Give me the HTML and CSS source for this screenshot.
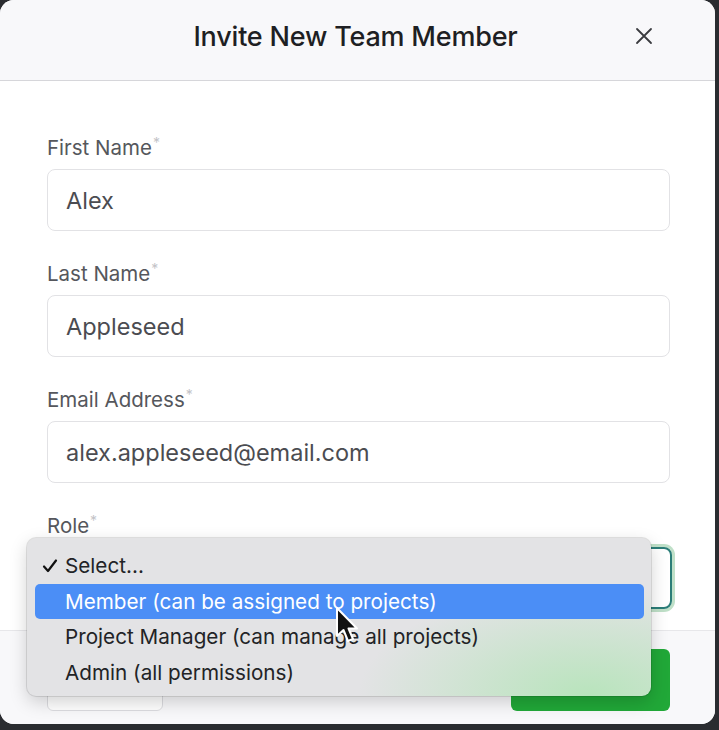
FILE: index.html
```html
<!DOCTYPE html>
<html lang="en">
<head>
<meta charset="utf-8">
<title>Invite New Team Member</title>
<link rel="stylesheet" href="styles.css">
</head>
<body>
<div class="modal">
  <header class="header">
    <span></span>
    <h1 class="title">Invite New Team Member</h1>
    <button class="close" aria-label="Close">
      <svg width="18" height="18" viewBox="0 0 18 18"><path d="M2 2L16 16M16 2L2 16" stroke="#3a3b3f" stroke-width="1.8" stroke-linecap="round"/></svg>
    </button>
  </header>
  <main class="body">
    <div class="field">
      <label class="label">First Name<sup class="req">*</sup></label>
      <div class="input">Alex</div>
    </div>
    <div class="field">
      <label class="label">Last Name<sup class="req">*</sup></label>
      <div class="input">Appleseed</div>
    </div>
    <div class="field">
      <label class="label">Email Address<sup class="req">*</sup></label>
      <div class="input">alex.appleseed@email.com</div>
    </div>
    <div class="field">
      <label class="label">Role<sup class="req">*</sup></label>
      <div class="input select" aria-label="Role">
        <svg class="chev" width="14" height="10" viewBox="0 0 14 10"><path d="M2 2L7 7L12 2" fill="none" stroke="#8a8b90" stroke-width="1.6" stroke-linecap="round"/></svg>
      </div>
    </div>
  </main>
  <footer class="footer">
    <button class="btn btn-cancel" aria-label="Cancel"></button>
    <button class="btn btn-primary" aria-label="Send Invite"></button>
  </footer>

  <div class="menu">
    <div class="item">
      <svg class="check" width="16" height="16" viewBox="0 0 16 16"><path d="M2 8.5L6 13L14 2.5" fill="none" stroke="#111" stroke-width="2.2" stroke-linecap="round" stroke-linejoin="round"/></svg>
      Select...
    </div>
    <div class="item active">Member (can be assigned to projects)</div>
    <div class="item">Project Manager (can manage all projects)</div>
    <div class="item">Admin (all permissions)</div>
  </div>

  <svg class="cursor" width="26" height="38" viewBox="0 0 26 38">
    <path d="M2 2 L2 30 L8.5 24 L13 35 L18 33 L13.5 22.5 L22 22.5 Z" fill="#111" stroke="#fff" stroke-width="2" stroke-linejoin="round"/>
  </svg>
</div>
</body>
</html>
```
FILE: styles.css
```css
* { box-sizing: border-box; }
html, body { margin: 0; padding: 0; }
body {
  background: #2a2c30;
  width: 719px;
  height: 730px;
  overflow: hidden;
  font-family: Inter, "Liberation Sans", sans-serif;
}
.modal {
  position: relative;
  width: 715px;
  height: 724px;
  background: #ffffff;
  border-radius: 14px;
  overflow: hidden;
  display: flex;
  flex-direction: column;
}
.header {
  height: 81px;
  flex: none;
  background: #f8f8fa;
  border-bottom: 1px solid #d6d6da;
  display: grid;
  grid-template-columns: 1fr auto 1fr;
  align-items: center;
  padding-bottom: 8px;
}
.title {
  margin: 0;
  font-size: 27px;
  font-weight: 500;
  color: #1e1f23;
  letter-spacing: -0.2px;
  transform: translateX(-2px);
}
.close {
  justify-self: end;
  margin-right: 62px;
  background: none;
  border: 0;
  padding: 0;
  width: 18px;
  height: 18px;
  display: flex;
}
.body {
  flex: none;
  height: 549px;
  padding: 55px 45px 0 47px;
  display: flex;
  flex-direction: column;
  gap: 31px;
}
.field {
  display: flex;
  flex-direction: column;
  gap: 9px;
}
.label {
  font-size: 20.5px;
  line-height: 24px;
  color: #55575c;
}
.req {
  font-size: 14px;
  color: #c3c3c7;
  vertical-align: 7px;
  line-height: 0;
  margin-left: 1px;
}
.input {
  height: 62px;
  border: 1px solid #e2e2e5;
  border-radius: 8px;
  padding: 0 18px;
  display: flex;
  align-items: center;
  font-size: 23.5px;
  color: #4b4c51;
}
.select {
  border: 2px solid #2b7d78;
  box-shadow: 0 0 0 3px #bfe0c8;
  justify-content: flex-end;
  width: 625px;
}
.chev { margin-right: 2px; }
.footer {
  flex: 1;
  background: #f8f8fa;
  border-top: 1px solid #e7e7ea;
  padding: 18px 45px 0 47px;
  display: flex;
  justify-content: space-between;
  align-items: flex-start;
}
.btn {
  height: 62px;
  border-radius: 6px;
}
.btn-cancel {
  width: 116px;
  background: #ffffff;
  border: 1px solid #dcdce0;
}
.btn-primary {
  width: 159px;
  background: #21a838;
  border: 0;
}
.menu {
  position: absolute;
  left: 27px;
  top: 538px;
  width: 624px;
  height: 158px;
  border-radius: 9px;
  background:
    radial-gradient(ellipse 230px 110px at 90% 100%, rgba(184, 228, 188, 1), rgba(190, 228, 194, 0) 100%),
    #e3e3e5;
  box-shadow: 0 0 0 1px rgba(0,0,0,0.10), 0 6px 18px rgba(0,0,0,0.18);
  padding: 10px 7px 5px 8px;
  display: flex;
  flex-direction: column;
}
.item {
  position: relative;
  height: 35.5px;
  display: flex;
  align-items: center;
  padding-left: 30px;
  font-size: 20.7px;
  color: #222326;
  border-radius: 5px;
}
.item.active {
  background: #4b8ef6;
  color: #ffffff;
}
.check {
  position: absolute;
  left: 7px;
  top: 10px;
}
.cursor {
  position: absolute;
  left: 335px;
  top: 606px;
}
```
